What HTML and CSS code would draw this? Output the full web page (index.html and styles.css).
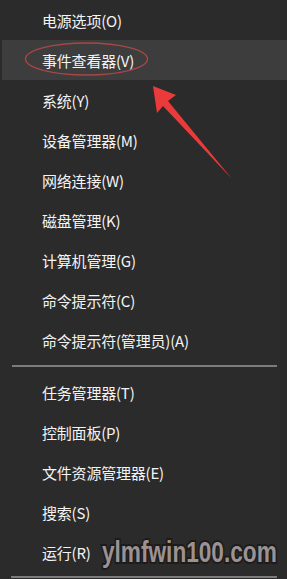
FILE: index.html
```html
<!DOCTYPE html>
<html lang="zh-CN">
<head>
<meta charset="utf-8">
<link rel="stylesheet" href="styles.css">
</head>
<body>
<div class="menu">
  <div class="group">
    <div class="item">电源选项(O)</div>
    <div class="item active">事件查看器(V)</div>
    <div class="item">系统(Y)</div>
    <div class="item">设备管理器(M)</div>
    <div class="item">网络连接(W)</div>
    <div class="item">磁盘管理(K)</div>
    <div class="item">计算机管理(G)</div>
    <div class="item">命令提示符(C)</div>
    <div class="item">命令提示符(管理员)(A)</div>
  </div>
  <div class="sep"></div>
  <div class="group">
    <div class="item">任务管理器(T)</div>
    <div class="item">控制面板(P)</div>
    <div class="item">文件资源管理器(E)</div>
    <div class="item">搜索(S)</div>
    <div class="item">运行(R)</div>
  </div>
  <div class="sep sep-bottom"></div>
</div>
<svg class="annot" width="287" height="579" viewBox="0 0 287 579">
  <ellipse cx="86.5" cy="59" rx="61" ry="16" fill="none" stroke="#a84646" stroke-width="1.4"/>
  <path d="M153 86 L176 95 L168 101 L232 179 L163 106 L157 113 Z" fill="#ea3a3a"/>
</svg>
<div class="watermark">ylmfwin100.com</div>
</body>
</html>
```
FILE: styles.css
```css
html, body {
  margin: 0;
  padding: 0;
  background: #2b2b2b;
}
body {
  width: 287px;
  height: 579px;
  overflow: hidden;
  position: relative;
  font-family: "Noto Sans CJK SC", "Noto Sans", sans-serif;
}
.menu {
  display: flex;
  flex-direction: column;
}
.item {
  height: 40px;
  display: flex;
  align-items: center;
  padding-left: 42px;
  color: #f4f4f4;
  font-size: 15px;
  letter-spacing: -0.2px;
}
.item.active {
  background: #3d3d3d;
  margin-left: 2px;
  padding-left: 40px;
}
.sep {
  height: 2px;
  background: #7c7c7c;
  margin: 5px 10px 5px 12px;
}
.sep-bottom {
  margin: 4px 10px 0 11px;
}
.annot {
  position: absolute;
  left: 0;
  top: 0;
  pointer-events: none;
}
.watermark {
  position: absolute;
  left: 102px;
  top: 538px;
  font-family: "Liberation Sans", Arial, sans-serif;
  font-weight: bold;
  font-size: 29px;
  line-height: 29px;
  color: #9c9292;
  -webkit-text-stroke: 4px #1c1c1c;
  paint-order: stroke fill;
  transform: scaleX(0.78);
  transform-origin: left top;
  white-space: nowrap;
}
```
